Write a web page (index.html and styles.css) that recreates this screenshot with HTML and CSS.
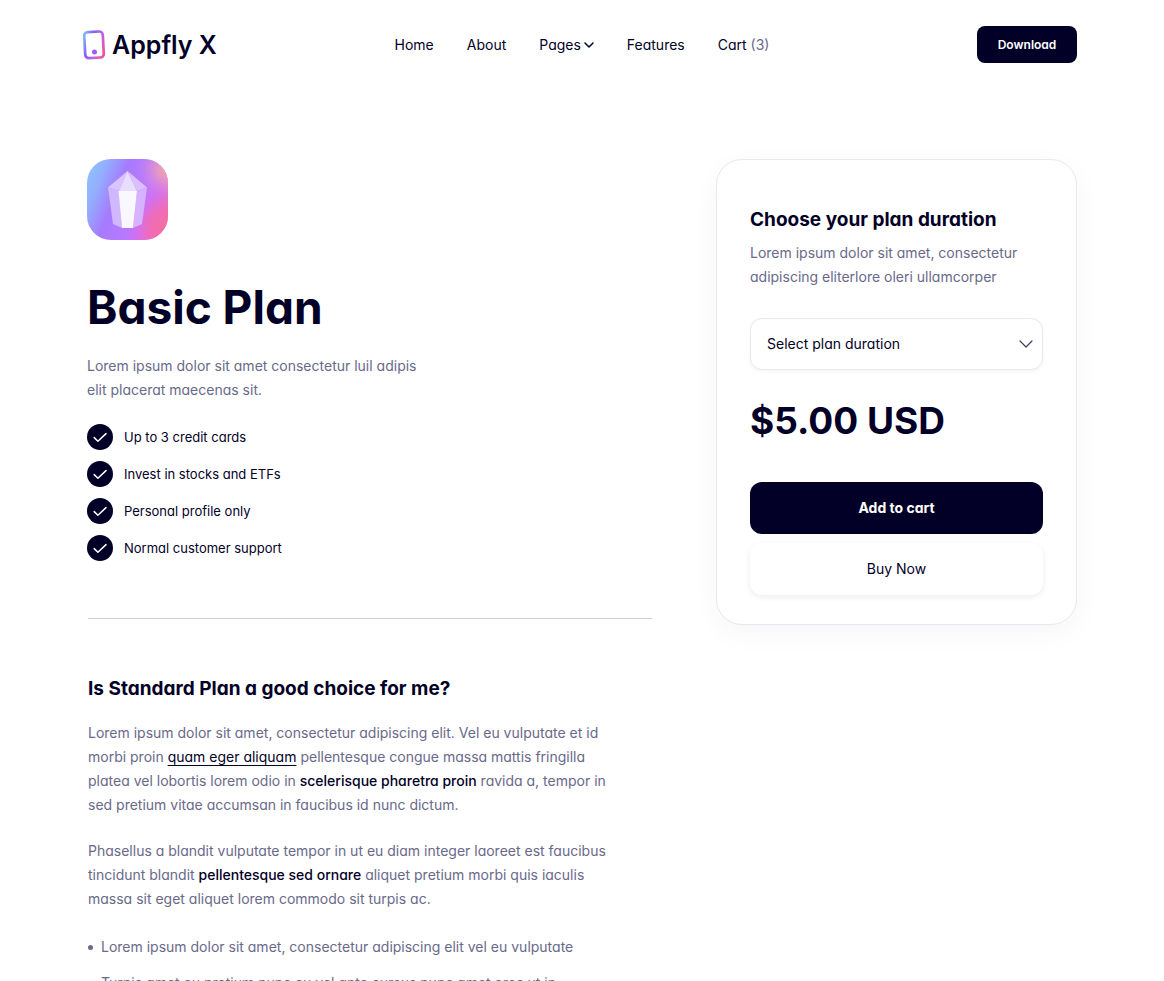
FILE: index.html
```html
<!DOCTYPE html>
<html lang="en">
<head>
<meta charset="utf-8">
<meta name="viewport" content="width=device-width, initial-scale=1">
<title>Basic Plan - Appfly X</title>
<link rel="stylesheet" href="styles.css">
</head>
<body>
<header class="container header">
  <a class="logo" href="#">
    <svg class="logo-mark" viewBox="0 0 24 30" aria-hidden="true">
      <defs><linearGradient id="mark" x1="0" y1="0.2" x2="1" y2="0.8"><stop offset="0" stop-color="#7fb0ff"/><stop offset="0.3" stop-color="#8a5cfa"/><stop offset="0.65" stop-color="#b566f2"/><stop offset="1" stop-color="#f0529c"/></linearGradient></defs>
      <rect x="1.700" y="1.800" width="18.600" height="26" rx="3.6" transform="rotate(-3 11 15)" fill="none" stroke="url(#mark)" stroke-width="2.7"/>
      <circle cx="11.500" cy="22" r="2.5" fill="#a25cf5"/>
    </svg>
    <span>Appfly X</span>
  </a>
  <nav class="nav" aria-label="Main">
    <a href="#">Home</a>
    <a href="#">About</a>
    <a class="nav-pages" href="#">Pages<svg class="nav-caret" viewBox="0 0 10 8" aria-hidden="true"><path d="M1 2l4 4 4-4"/></svg></a>
    <a href="#">Features</a>
    <a href="#">Cart <span class="count">(3)</span></a>
  </nav>
  <a class="download" href="#">Download</a>
</header>

<main class="container main">
  <article>
    <svg class="plan-icon" viewBox="0 0 81 81" aria-hidden="true">
      <defs>
        <linearGradient id="base" x1="0" y1="0.3" x2="1" y2="0.7"><stop offset="0" stop-color="#8fbcff"/><stop offset="0.12" stop-color="#93aeff"/><stop offset="0.35" stop-color="#a67bff"/><stop offset="0.62" stop-color="#b679ff"/><stop offset="0.8" stop-color="#d46ff0"/><stop offset="1" stop-color="#f276b0"/></linearGradient>
        <radialGradient id="peach" cx="1" cy="0.12" r="0.42"><stop offset="0" stop-color="#f3ae9f"/><stop offset="0.35" stop-color="#e99cc0" stop-opacity="0.8"/><stop offset="1" stop-color="#c77bf8" stop-opacity="0"/></radialGradient>
        <radialGradient id="pink" cx="1" cy="0.85" r="0.48"><stop offset="0" stop-color="#f56f9c"/><stop offset="0.5" stop-color="#f06bb4" stop-opacity="0.85"/><stop offset="1" stop-color="#d86ee8" stop-opacity="0"/></radialGradient>
        <clipPath id="tile"><rect width="81" height="81" rx="24"/></clipPath>
      </defs>
      <g clip-path="url(#tile)">
        <rect width="81" height="81" fill="url(#base)"/><rect width="81" height="81" fill="url(#peach)"/><rect width="81" height="81" fill="url(#pink)"/>
      </g>
      <path d="M40.5 12L21 28.5 32 32z" fill="#d8c4ff"/>
      <path d="M40.5 12L32 32h18z" fill="#e8ddff"/>
      <path d="M40.5 12L60 28.5 50 32z" fill="#dcbfff"/>
      <path d="M21 28.5L32 32 35 69 26 65z" fill="#d0b8ff"/>
      <path d="M60 28.5L50 32 46 69 55 65z" fill="#d6b2ff"/>
      <path d="M31.500 32h18.500L46 69H35z" fill="#faf8ff"/>
    </svg>
    <h1>Basic Plan</h1>
    <p class="lead">Lorem ipsum dolor sit amet consectetur luil adipis<br>elit placerat maecenas sit.</p>
    <ul class="features">
      <li><svg class="check" viewBox="0 0 26 26" aria-hidden="true"><circle cx="13" cy="13" r="13"/><path d="M7.200 13.600l3.700 3.600 8.100-7.600"/></svg>Up to 3 credit cards</li>
      <li><svg class="check" viewBox="0 0 26 26" aria-hidden="true"><circle cx="13" cy="13" r="13"/><path d="M7.200 13.600l3.700 3.600 8.100-7.600"/></svg>Invest in stocks and ETFs</li>
      <li><svg class="check" viewBox="0 0 26 26" aria-hidden="true"><circle cx="13" cy="13" r="13"/><path d="M7.200 13.600l3.700 3.600 8.100-7.600"/></svg>Personal profile only</li>
      <li><svg class="check" viewBox="0 0 26 26" aria-hidden="true"><circle cx="13" cy="13" r="13"/><path d="M7.200 13.600l3.700 3.600 8.100-7.600"/></svg>Normal customer support</li>
    </ul>
    <section class="details">
      <h2>Is Standard Plan a good choice for me?</h2>
      <p>Lorem ipsum dolor sit amet, consectetur adipiscing elit. Vel eu vulputate et id<br>morbi proin <a href="#">quam eger aliquam</a> pellentesque congue massa mattis fringilla<br>platea vel lobortis lorem odio in <strong>scelerisque pharetra proin</strong> ravida a, tempor in<br>sed pretium vitae accumsan in faucibus id nunc dictum.</p>
      <p>Phasellus a blandit vulputate tempor in ut eu diam integer laoreet est faucibus<br>tincidunt blandit <strong>pellentesque sed ornare</strong> aliquet pretium morbi quis iaculis<br>massa sit eget aliquet lorem commodo sit turpis ac.</p>
      <ul class="bullets">
        <li>Lorem ipsum dolor sit amet, consectetur adipiscing elit vel eu vulputate</li>
        <li>Turpis amet eu pretium nunc eu vel ante cursus nunc amet eros ut in</li>
      </ul>
    </section>
  </article>

  <aside class="card">
    <h2>Choose your plan duration</h2>
    <p>Lorem ipsum dolor sit amet, consectetur<br>adipiscing eliterlore oleri ullamcorper</p>
    <div class="select-box">
      <select class="select" aria-label="Plan duration"><option>Select plan duration</option><option>Monthly</option><option>Yearly</option></select>
      <svg class="select-caret" viewBox="0 0 14 8" aria-hidden="true"><path d="M1 1l6 6 6-6"/></svg>
    </div>
    <div class="price">$5.00 USD</div>
    <button class="btn btn-dark" type="button">Add to cart</button>
    <button class="btn btn-light" type="button">Buy Now</button>
  </aside>
</main>
</body>
</html>
```

FILE: styles.css
```css
* { box-sizing: border-box; }

body {
  margin: 0;
  background: #fff;
  color: #030027;
  font-family: Inter, "Liberation Sans", sans-serif;
  font-feature-settings: "cv11";
  font-size: 14px;
  line-height: 24px;
}

h1, h2, p, ul { margin: 0; padding: 0; }
ul { list-style: none; }
a { color: inherit; text-decoration: none; }
button, select { font: inherit; font-feature-settings: inherit; color: inherit; }

.container {
  width: 100%;
  max-width: 1038px;
  margin: 0 auto;
  padding: 0 24px;
}

.header {
  display: grid;
  grid-template-columns: 1fr auto 1fr;
  align-items: center;
  padding-top: 26px;
}
.logo {
  display: flex;
  align-items: center;
  gap: 5px;
  margin-left: -4px;
  font-size: 25px;
  font-weight: 600;
  white-space: nowrap;
}
.logo-mark { width: 24px; height: 30px; }
.nav { display: flex; gap: 33px; white-space: nowrap; }
.nav-pages { display: flex; align-items: center; gap: 3px; }
.nav-caret { width: 10px; height: 8px; }
.nav-caret path, .select-caret path {
  fill: none;
  stroke: #030027;
  stroke-width: 1.5;
  stroke-linecap: round;
  stroke-linejoin: round;
}
.select-caret path { stroke: #3f3d5c; stroke-width: 1.2; }
.count { color: #696989; }
.download {
  justify-self: end;
  width: 100px;
  padding: 7px 0 6px;
  border-radius: 8px;
  background: #030027;
  color: #fff;
  font-size: 12px;
  font-weight: 600;
  text-align: center;
}

.main {
  display: grid;
  grid-template-columns: 1fr 361px;
  gap: 64px;
  align-items: start;
  padding-top: 96px;
  padding-bottom: 64px;
}

.plan-icon { display: block; width: 81px; height: 81px; }
h1 {
  margin-top: 39px;
  font-size: 46px;
  line-height: 56px;
  font-weight: 700;
}
.lead { margin-top: 19px; color: #696989; }
.features {
  display: grid;
  gap: 11px;
  margin-top: 22px;
  font-size: 13px;
}
.features li { display: flex; align-items: center; gap: 11px; }
.check { width: 26px; height: 26px; }
.check circle { fill: #030027; }
.check path {
  fill: none;
  stroke: #fff;
  stroke-width: 1.5;
  stroke-linecap: round;
  stroke-linejoin: round;
}

.details {
  margin: 57px 0 0 1px;
  padding-top: 56px;
  border-top: 1px solid #cccbd9;
}
h2 { font-size: 19px; line-height: 28px; font-weight: 700; }
.details p { margin-top: 22px; color: #696989; }
.details h2 + p { margin-top: 18px; }
.details p a, .details strong { color: #030027; font-weight: 500; }
.details p a { font-weight: 400; text-decoration: underline; text-underline-offset: 3px; }
.bullets { display: grid; gap: 12px; margin-top: 24px; color: #696989; }
.bullets li { display: flex; align-items: center; gap: 8px; }
.bullets li::before {
  content: "";
  width: 5px;
  height: 5px;
  border-radius: 50%;
  background: #696989;
}

.card {
  padding: 46px 33px 29px;
  border: 1px solid #e8e8ee;
  border-radius: 26px;
  background: #fff;
  box-shadow: 0 8px 28px rgba(3, 0, 39, 0.04);
}
.card p { margin-top: 7px; color: #696989; }
.select-box { position: relative; margin-top: 29px; }
.select {
  display: block;
  width: 100%;
  height: 52px;
  padding: 0 40px 0 16px;
  border: 1px solid #e8e8ee;
  border-radius: 12px;
  background: #fff;
  box-shadow: 0 2px 4px rgba(3, 0, 39, 0.04);
  appearance: none;
}
.select-caret {
  position: absolute;
  top: 22px;
  right: 10px;
  width: 14px;
  height: 8px;
  pointer-events: none;
}
.price {
  margin-top: 27px;
  font-size: 37px;
  line-height: 48px;
  font-weight: 700;
}
.btn {
  display: block;
  width: 100%;
  height: 52px;
  border: 0;
  border-radius: 12px;
}
.btn-dark { margin-top: 37px; background: #030027; color: #fff; font-weight: 700; }
.btn-light { margin-top: 9px; background: #fff; box-shadow: 0 2px 6px rgba(3, 0, 39, 0.08); }

@media (max-width: 860px) {
  .header { grid-template-columns: 1fr auto; row-gap: 16px; }
  .nav { grid-row: 2; grid-column: 1 / -1; flex-wrap: wrap; }
  .main { grid-template-columns: 1fr; }
}
```
